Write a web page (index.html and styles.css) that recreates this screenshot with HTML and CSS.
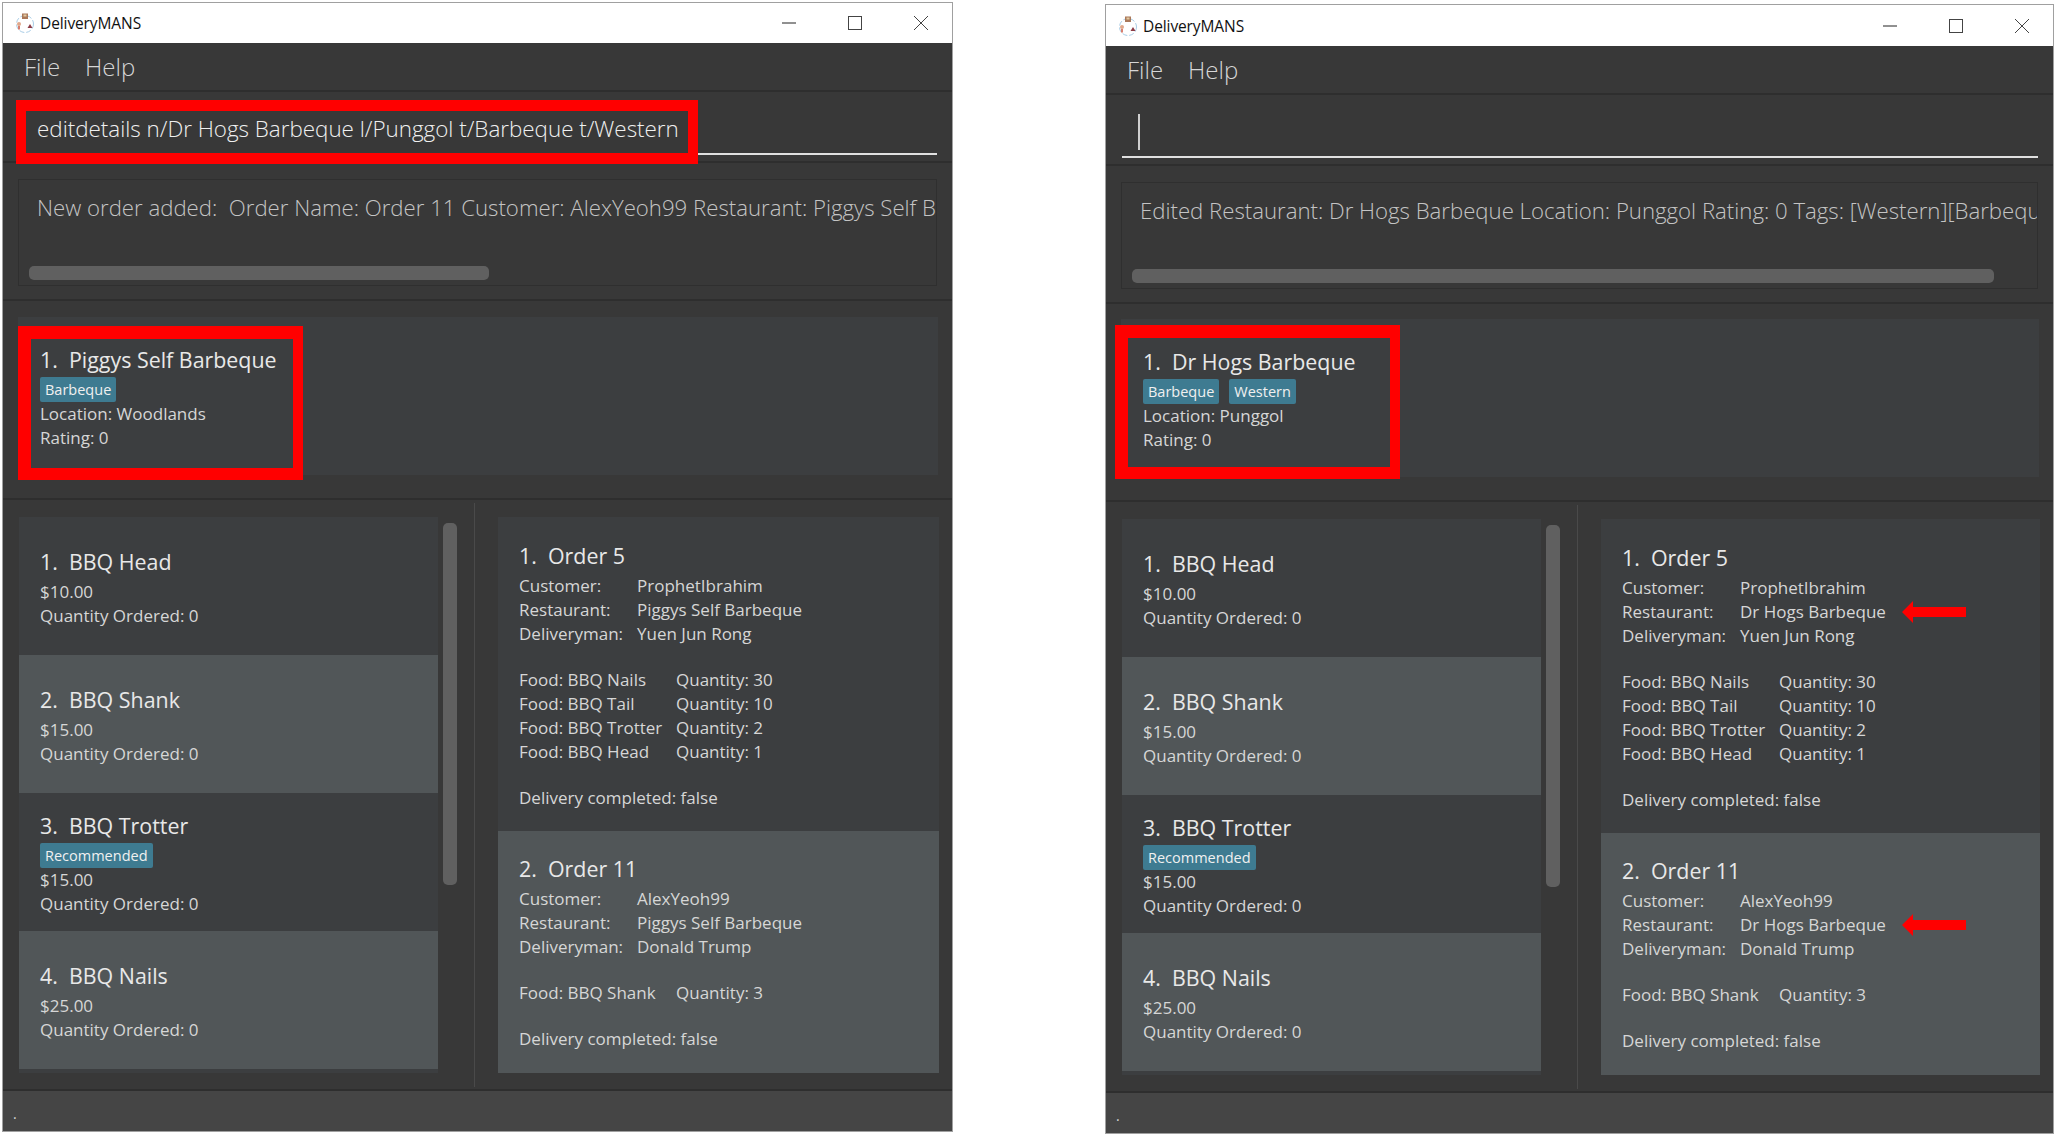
FILE: index.html
```html
<!DOCTYPE html>
<html>
<head>
<meta charset="utf-8">
<title>DeliveryMANS</title>
<link rel="stylesheet" href="styles.css">
</head>
<body>

<svg class="defs" width="0" height="0">
  <symbol id="logo" viewBox="0 0 20 20">
    <circle cx="10" cy="11" r="8.5" fill="none" stroke="#a9cde6" stroke-width="1" stroke-dasharray="5 2"/>
    <rect x="7" y="0.5" width="6" height="5.5" fill="#a9785a"/>
    <rect x="8.5" y="1.5" width="3" height="2" fill="#e3c9a0"/>
    <circle cx="4" cy="11" r="2" fill="#e0a88c"/>
    <rect x="3.2" y="13" width="1.6" height="3.5" fill="#d0604c"/>
    <path d="M12.5 15l2.5-4 2.5 4z" fill="#8c3b45"/>
  </symbol>
  <symbol id="min" viewBox="0 0 14 14"><path d="M0 7h14" stroke="#222" fill="none"/></symbol>
  <symbol id="max" viewBox="0 0 14 14"><rect x=".5" y=".5" width="13" height="13" stroke="#444" fill="none"/></symbol>
  <symbol id="close" viewBox="0 0 14 14"><path d="M0 0l14 14M14 0L0 14" stroke="#444" fill="none"/></symbol>
  <symbol id="arrow" viewBox="0 0 64 22"><path d="M0 11L11 0v6h53v10H11v6z" fill="#f00"/></symbol>
</svg>

<div class="win">
  <div class="titlebar">
    <svg class="logo"><use href="#logo"/></svg>
    <span class="apptitle">DeliveryMANS</span>
    <div class="winbtns">
      <svg class="winbtn"><use href="#min"/></svg>
      <svg class="winbtn"><use href="#max"/></svg>
      <svg class="winbtn"><use href="#close"/></svg>
    </div>
  </div>
  <div class="menubar"><span>File</span><span>Help</span></div>
  <div class="commandbox">
    <div class="commandline"><span class="commandtext">editdetails n/Dr Hogs Barbeque l/Punggol t/Barbeque t/Western</span></div>
  </div>
  <div class="resultpane">
    <div class="resultbox">
      <div class="resulttext">New order added:  Order Name: Order 11 Customer: AlexYeoh99 Restaurant: Piggys Self Barbeque Deliveryman: Donald Trump</div>
      <div class="hscroll hscroll-short"></div>
    </div>
  </div>
  <div class="restpane">
    <div class="restcard">
      <div class="cardtitle">1.&nbsp; Piggys Self Barbeque</div>
      <div class="tags"><span class="tag">Barbeque</span></div>
      <div class="line">Location: Woodlands</div>
      <div class="line">Rating: 0</div>
    </div>
  </div>
  <div class="lower">
    <div class="foodpane">
      <div class="foodlist">
        <div class="food"><div class="cardtitle">1.&nbsp; BBQ Head</div><div class="line">$10.00</div><div class="line">Quantity Ordered: 0</div></div>
        <div class="food odd"><div class="cardtitle">2.&nbsp; BBQ Shank</div><div class="line">$15.00</div><div class="line">Quantity Ordered: 0</div></div>
        <div class="food food-tagged"><div class="cardtitle">3.&nbsp; BBQ Trotter</div><div class="tags"><span class="tag">Recommended</span></div><div class="line">$15.00</div><div class="line">Quantity Ordered: 0</div></div>
        <div class="food odd"><div class="cardtitle">4.&nbsp; BBQ Nails</div><div class="line">$25.00</div><div class="line">Quantity Ordered: 0</div></div>
      </div>
      <div class="vscroll"></div>
    </div>
    <div class="orderpane">
      <div class="order order-tall">
        <div class="cardtitle">1.&nbsp; Order 5</div>
        <div class="kv"><span>Customer:</span><span>ProphetIbrahim</span></div>
        <div class="kv"><span>Restaurant:</span><span>Piggys Self Barbeque</span></div>
        <div class="kv"><span>Deliveryman:</span><span>Yuen Jun Rong</span></div>
        <div class="foods">
          <div class="fq"><span>Food: BBQ Nails</span><span>Quantity: 30</span></div>
          <div class="fq"><span>Food: BBQ Tail</span><span>Quantity: 10</span></div>
          <div class="fq"><span>Food: BBQ Trotter</span><span>Quantity: 2</span></div>
          <div class="fq"><span>Food: BBQ Head</span><span>Quantity: 1</span></div>
        </div>
        <div class="line done">Delivery completed: false</div>
      </div>
      <div class="order odd">
        <div class="cardtitle">2.&nbsp; Order 11</div>
        <div class="kv"><span>Customer:</span><span>AlexYeoh99</span></div>
        <div class="kv"><span>Restaurant:</span><span>Piggys Self Barbeque</span></div>
        <div class="kv"><span>Deliveryman:</span><span>Donald Trump</span></div>
        <div class="foods">
          <div class="fq"><span>Food: BBQ Shank</span><span>Quantity: 3</span></div>
        </div>
        <div class="line done">Delivery completed: false</div>
      </div>
    </div>
  </div>
  <div class="statusbar">.</div>
  <div class="mark mark-command"></div>
  <div class="mark mark-rest"></div>
</div>

<div class="win win-b">
  <div class="titlebar">
    <svg class="logo"><use href="#logo"/></svg>
    <span class="apptitle">DeliveryMANS</span>
    <div class="winbtns">
      <svg class="winbtn"><use href="#min"/></svg>
      <svg class="winbtn"><use href="#max"/></svg>
      <svg class="winbtn"><use href="#close"/></svg>
    </div>
  </div>
  <div class="menubar"><span>File</span><span>Help</span></div>
  <div class="commandbox">
    <div class="commandline"><span class="caret"></span></div>
  </div>
  <div class="resultpane">
    <div class="resultbox">
      <div class="resulttext">Edited Restaurant: Dr Hogs Barbeque Location: Punggol Rating: 0 Tags: [Western][Barbeque]</div>
      <div class="hscroll hscroll-long"></div>
    </div>
  </div>
  <div class="restpane">
    <div class="restcard">
      <div class="cardtitle">1.&nbsp; Dr Hogs Barbeque</div>
      <div class="tags"><span class="tag">Barbeque</span><span class="tag">Western</span></div>
      <div class="line">Location: Punggol</div>
      <div class="line">Rating: 0</div>
    </div>
  </div>
  <div class="lower">
    <div class="foodpane">
      <div class="foodlist">
        <div class="food"><div class="cardtitle">1.&nbsp; BBQ Head</div><div class="line">$10.00</div><div class="line">Quantity Ordered: 0</div></div>
        <div class="food odd"><div class="cardtitle">2.&nbsp; BBQ Shank</div><div class="line">$15.00</div><div class="line">Quantity Ordered: 0</div></div>
        <div class="food food-tagged"><div class="cardtitle">3.&nbsp; BBQ Trotter</div><div class="tags"><span class="tag">Recommended</span></div><div class="line">$15.00</div><div class="line">Quantity Ordered: 0</div></div>
        <div class="food odd"><div class="cardtitle">4.&nbsp; BBQ Nails</div><div class="line">$25.00</div><div class="line">Quantity Ordered: 0</div></div>
      </div>
      <div class="vscroll"></div>
    </div>
    <div class="orderpane">
      <div class="order order-tall">
        <div class="cardtitle">1.&nbsp; Order 5</div>
        <div class="kv"><span>Customer:</span><span>ProphetIbrahim</span></div>
        <div class="kv"><span>Restaurant:</span><span>Dr Hogs Barbeque</span><svg class="arrow"><use href="#arrow"/></svg></div>
        <div class="kv"><span>Deliveryman:</span><span>Yuen Jun Rong</span></div>
        <div class="foods">
          <div class="fq"><span>Food: BBQ Nails</span><span>Quantity: 30</span></div>
          <div class="fq"><span>Food: BBQ Tail</span><span>Quantity: 10</span></div>
          <div class="fq"><span>Food: BBQ Trotter</span><span>Quantity: 2</span></div>
          <div class="fq"><span>Food: BBQ Head</span><span>Quantity: 1</span></div>
        </div>
        <div class="line done">Delivery completed: false</div>
      </div>
      <div class="order odd">
        <div class="cardtitle">2.&nbsp; Order 11</div>
        <div class="kv"><span>Customer:</span><span>AlexYeoh99</span></div>
        <div class="kv"><span>Restaurant:</span><span>Dr Hogs Barbeque</span><svg class="arrow"><use href="#arrow"/></svg></div>
        <div class="kv"><span>Deliveryman:</span><span>Donald Trump</span></div>
        <div class="foods">
          <div class="fq"><span>Food: BBQ Shank</span><span>Quantity: 3</span></div>
        </div>
        <div class="line done">Delivery completed: false</div>
      </div>
    </div>
  </div>
  <div class="statusbar">.</div>
  <div class="mark mark-rest"></div>
</div>

</body>
</html>
```

FILE: styles.css
```css
* {
  box-sizing: border-box;
}

body {
  margin: 0;
  padding: 2px 0 0 2px;
  background: #fff;
  display: flex;
  gap: 152px;
  align-items: flex-start;
  font-family: "Open Sans", "Liberation Sans", sans-serif;
  color: #d6d6d6;
  overflow: hidden;
}

.defs {
  position: absolute;
}

.win {
  position: relative;
  width: 951px;
  border: 1px solid #a0a0a0;
  background: #383838;
  display: flex;
  flex-direction: column;
}

.win-b {
  width: 949px;
  margin-top: 2px;
}

.titlebar {
  height: 40px;
  background: #fff;
  display: flex;
  align-items: center;
  padding-left: 12px;
}

.win-b .titlebar {
  height: 41px;
}

.logo {
  width: 20px;
  height: 20px;
}

.apptitle {
  margin-left: 5px;
  font-size: 15.5px;
  letter-spacing: -0.1px;
  color: #111;
}

.winbtns {
  margin-left: auto;
  display: flex;
  gap: 52px;
  padding-right: 24px;
}

.winbtn {
  width: 14px;
  height: 14px;
}

.menubar {
  height: 49px;
  border-bottom: 2px solid #2e2e2e;
  display: flex;
  align-items: center;
  gap: 25px;
  padding-left: 21px;
  font-size: 24px;
  font-weight: 300;
}

.commandbox {
  height: 71px;
  border-bottom: 2px solid #2e2e2e;
  padding: 0 15px 0 16px;
}

.commandline {
  height: 63px;
  border-bottom: 2px solid #e0e0e0;
  display: flex;
  align-items: center;
  padding: 12px 0 0 18px;
}

.commandtext {
  font-size: 22.4px;
  font-weight: 300;
  color: #f0f0f0;
  white-space: nowrap;
}

.caret {
  width: 2px;
  height: 36px;
  margin-left: -2px;
  background: #d0d0d0;
}

.resultpane {
  height: 138px;
  border-bottom: 2px solid #2e2e2e;
  padding: 16px 15px 0 15px;
}

.resultbox {
  height: 107px;
  border: 1px solid #2f2f2f;
  padding: 0 0 5px 18px;
  display: flex;
  flex-direction: column;
  justify-content: space-between;
  overflow: hidden;
}

.resulttext {
  margin-top: 13px;
  font-size: 22.2px;
  line-height: 30px;
  font-weight: 300;
  color: #c4c4c4;
  white-space: pre;
}

.hscroll {
  height: 14px;
  margin-left: -8px;
  border-radius: 5px;
  background: #606060;
}

.hscroll-short {
  width: 460px;
}

.hscroll-long {
  width: 862px;
}

.restpane {
  height: 199px;
  border-bottom: 2px solid #2e2e2e;
  padding: 16px 14px 0 15px;
}

.win-b .restpane {
  height: 198px;
  padding-top: 15px;
}

.restcard {
  height: 158px;
  background: #3c3e40;
  padding: 28px 0 0 22px;
}

.cardtitle {
  height: 30px;
  line-height: 29px;
  font-size: 21.4px;
  font-weight: 500;
  color: #e8e8e8;
  white-space: nowrap;
}

.line {
  height: 24px;
  line-height: 24px;
  font-size: 17px;
}

.tags {
  display: flex;
  gap: 10px;
  height: 27px;
  padding-top: 2px;
}

.tag {
  height: 25px;
  line-height: 25px;
  padding: 0 5px;
  border-radius: 2px;
  background: #3e7b91;
  color: #f0f0f0;
  font-size: 14.5px;
  font-weight: 500;
}

.lower {
  height: 589px;
  display: flex;
}

.foodpane {
  width: 472px;
  margin: 3px 0 2px;
  border-right: 1px solid #4a4a4a;
  padding: 14px 0 0 16px;
  display: flex;
  gap: 5px;
  align-items: flex-start;
}

.foodlist {
  width: 419px;
  height: 556px;
  overflow: hidden;
  background: #3c3e40;
}

.food {
  height: 138px;
  padding: 30px 0 0 21px;
  background: #3c3e40;
}

.food .cardtitle + .line {
  margin-top: 3px;
}

.food-tagged {
  padding-top: 18px;
}

.food.odd,
.order.odd {
  background: #515658;
}

.vscroll {
  width: 14px;
  height: 362px;
  margin-top: 6px;
  border-radius: 5px;
  background: #606060;
}

.orderpane {
  flex: 1;
  padding: 17px 13px 0 23px;
}

.order {
  height: 242px;
  padding: 21px 0 0 21px;
}

.order-tall {
  height: 314px;
  padding-top: 22px;
  background: #3c3e40;
}

.order .cardtitle {
  height: 35px;
  line-height: 34px;
}

.kv {
  position: relative;
  display: grid;
  grid-template-columns: 118px auto;
  justify-content: start;
  height: 24px;
  line-height: 24px;
  font-size: 17px;
  white-space: nowrap;
}

.arrow {
  position: absolute;
  left: 280px;
  top: 1px;
  width: 64px;
  height: 22px;
}

.foods {
  margin-top: 22px;
}

.fq {
  display: grid;
  grid-template-columns: 157px auto;
  height: 24px;
  line-height: 24px;
  font-size: 17px;
  white-space: nowrap;
}

.done {
  margin-top: 22px;
}

.statusbar {
  height: 42px;
  border-top: 2px solid #2e2e2e;
  background: #454545;
  padding: 8px 0 0 10px;
  font-size: 14px;
  line-height: 30px;
}

.mark {
  position: absolute;
  border-style: solid;
  border-color: #f00;
  border-width: 13px 10px 12px 13px;
}

.mark-command {
  left: 13px;
  top: 97px;
  width: 682px;
  height: 64px;
  border-width: 11px 10px;
}

.mark-rest {
  left: 15px;
  top: 323px;
  width: 285px;
  height: 154px;
}

.win-b .mark-rest {
  left: 9px;
  top: 320px;
}
```
